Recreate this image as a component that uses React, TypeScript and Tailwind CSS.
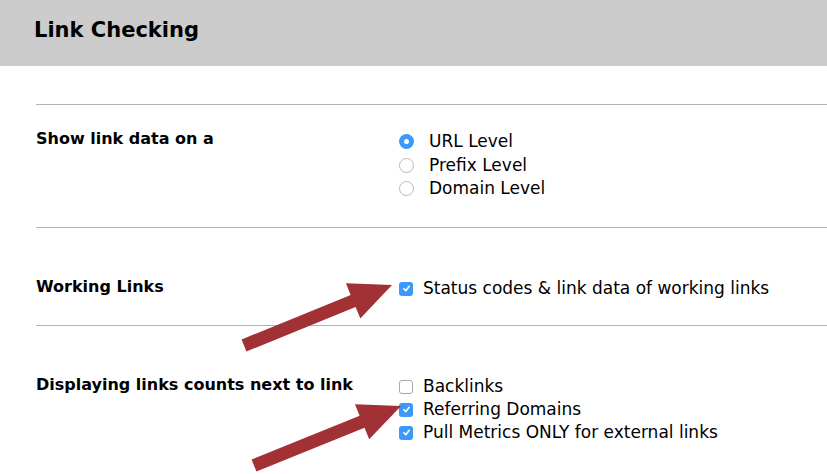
import React from "react";

const Radio = ({ checked }: { checked?: boolean }) =>
  checked ? (
    <span className="w-[15px] h-[15px] rounded-full bg-[#3b99fc] flex items-center justify-center shrink-0">
      <span className="w-[5px] h-[5px] rounded-full bg-white" />
    </span>
  ) : (
    <span className="w-[15px] h-[15px] rounded-full border border-[#b8b8b8] bg-white shrink-0" />
  );

const Check = ({ checked }: { checked?: boolean }) =>
  checked ? (
    <span className="w-[14px] h-[14px] rounded-[3px] bg-[#3b99fc] flex items-center justify-center shrink-0">
      <svg width="9" height="9" viewBox="0 0 10 10">
        <path d="M2 5.3 L4.2 7.5 L8 2.6" fill="none" stroke="white" strokeWidth="1.7" strokeLinecap="round" strokeLinejoin="round" />
      </svg>
    </span>
  ) : (
    <span className="w-[14px] h-[14px] rounded-[3px] border border-[#a8a8a8] bg-white shrink-0" />
  );

const Arrow = ({ x1, y1, x2, y2 }: { x1: number; y1: number; x2: number; y2: number }) => {
  const dx = x2 - x1;
  const dy = y2 - y1;
  const len = Math.hypot(dx, dy);
  const ux = dx / len;
  const uy = dy / len;
  const nx = -uy;
  const ny = ux;
  const head = 42;
  const hw = 19;
  const sw = 6.5;
  const bx = x2 - ux * head;
  const by = y2 - uy * head;
  const pts = [
    [x1 + nx * sw, y1 + ny * sw],
    [bx + nx * sw, by + ny * sw],
    [bx + nx * hw, by + ny * hw],
    [x2, y2],
    [bx - nx * hw, by - ny * hw],
    [bx - nx * sw, by - ny * sw],
    [x1 - nx * sw, y1 - ny * sw],
  ]
    .map((p) => p.join(","))
    .join(" ");
  return <polygon points={pts} fill="#a13134" />;
};

export default function App() {
  const font = { fontFamily: '"DejaVu Sans", "Lucida Grande", sans-serif' };
  return (
    <div className="relative w-[827px] h-[474px] bg-white overflow-hidden text-black" style={font}>
      <div className="h-[66px] bg-[#cccccc] pl-[34px] pt-[16px]">
        <h1 className="text-[21px] font-bold leading-[28px]">Link Checking</h1>
      </div>

      <div className="pl-[36px] pt-[38px]">
        {/* show link data */}
        <div className="border-t border-[#b3b3b3] h-[123px] pt-[24px] flex items-start">
          <div className="w-[363px] text-[16px] font-bold leading-[20px]">Show link data on a</div>
          <div className="flex flex-col text-[17px] leading-[23.5px] mt-[1px]">
            {[
              ["URL Level", true],
              ["Prefix Level", false],
              ["Domain Level", false],
            ].map(([label, on]) => (
              <div key={label as string} className="flex items-center">
                <Radio checked={on as boolean} />
                <span className="ml-[15px]">{label}</span>
              </div>
            ))}
          </div>
        </div>

        {/* working links */}
        <div className="border-t border-[#b3b3b3] h-[98px] pt-[49px] flex items-start">
          <div className="w-[363px] text-[16px] font-bold leading-[20px]">Working Links</div>
          <div className="flex items-center text-[17px] leading-[23.5px]">
            <Check checked />
            <span className="ml-[10px]">Status codes &amp; link data of working links</span>
          </div>
        </div>

        {/* link counts */}
        <div className="border-t border-[#b3b3b3] pt-[49px] flex items-start">
          <div className="w-[363px] text-[16px] font-bold leading-[20px]">Displaying links counts next to link</div>
          <div className="flex flex-col text-[17px] leading-[23px]">
            {[
              ["Backlinks", false],
              ["Referring Domains", true],
              ["Pull Metrics ONLY for external links", true],
            ].map(([label, on]) => (
              <div key={label as string} className="flex items-center">
                <Check checked={on as boolean} />
                <span className="ml-[10px]">{label}</span>
              </div>
            ))}
          </div>
        </div>
      </div>

      <svg className="absolute inset-0 pointer-events-none" width="827" height="474">
        <Arrow x1={244} y1={345.5} x2={392} y2={285} />
        <Arrow x1={254} y1={465.5} x2={401} y2={406} />
      </svg>
    </div>
  );
}
